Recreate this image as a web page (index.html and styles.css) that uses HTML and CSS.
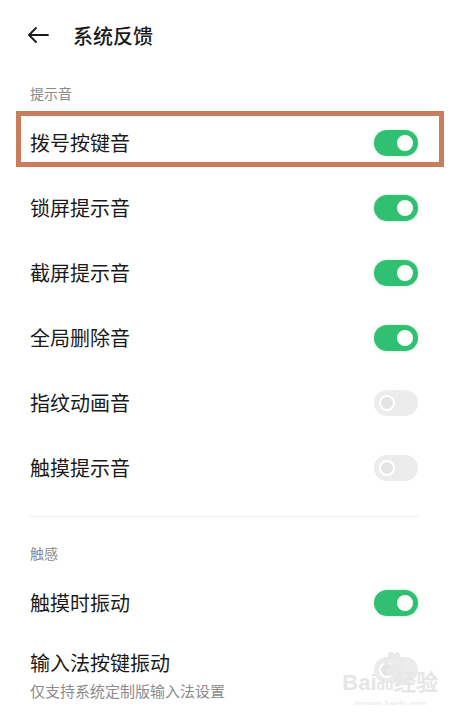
FILE: index.html
```html
<!doctype html>
<html lang="zh-CN">
<head>
    <meta charset="utf-8">
    <meta name="viewport" content="width=device-width, initial-scale=1">
    <title>系统反馈</title>
    <link rel="stylesheet" href="styles.css">
</head>
<body>
    <div class="header">
        <svg class="back" width="22" height="16" viewBox="0 0 22 16">
            <path d="M21 8H2M9 1L2 8l7 7" fill="none" stroke="#1a1a1a" stroke-width="1.8" stroke-linecap="round" stroke-linejoin="round"/>
        </svg>
        <span class="title">系统反馈</span>
    </div>

    <div class="section first">提示音</div>
    <div class="row marked"><span class="name">拨号按键音</span><span class="switch on"></span></div>
    <div class="row"><span class="name">锁屏提示音</span><span class="switch on"></span></div>
    <div class="row"><span class="name">截屏提示音</span><span class="switch on"></span></div>
    <div class="row"><span class="name">全局删除音</span><span class="switch on"></span></div>
    <div class="row"><span class="name">指纹动画音</span><span class="switch"></span></div>
    <div class="row"><span class="name">触摸提示音</span><span class="switch"></span></div>

    <div class="divider"></div>

    <div class="section">触感</div>
    <div class="row"><span class="name">触摸时振动</span><span class="switch on"></span></div>
    <div class="row two-line">
        <div>
            <div class="name">输入法按键振动</div>
            <div class="note">仅支持系统定制版输入法设置</div>
        </div>
        <span class="switch"></span>
    </div>

    <div class="watermark">
        <svg class="paw" width="26" height="24" viewBox="0 0 26 24">
            <g fill="#e9e9e9">
                <ellipse cx="6" cy="9" rx="3" ry="4"/>
                <ellipse cx="11" cy="4" rx="3" ry="4"/>
                <ellipse cx="17" cy="4" rx="3" ry="4"/>
                <ellipse cx="22" cy="9" rx="3" ry="4"/>
                <path d="M14 11c-4 0-8 5-8 9 0 3 3 4 8 4s8-1 8-4c0-4-4-9-8-9z"/>
            </g>
        </svg>
        <div class="mark">Bai<span class="du">du</span>经验</div>
        <div class="url">jingyan.baidu.com</div>
    </div>
</body>
</html>
```

FILE: styles.css
```css
body {
    margin: 0;
    background: #fff;
    font-family: "Noto Sans CJK SC", "Noto Sans", sans-serif;
    color: #1a1a1a;
    position: relative;
}

.header {
    height: 70px;
    display: flex;
    align-items: center;
    padding-left: 27px;
    gap: 24px;
}
.header .title {
    font-size: 20px;
    font-weight: 500;
}

.section {
    font-size: 14px;
    line-height: 20px;
    color: #8a8a8a;
    padding-left: 30px;
    margin-top: 26px;
    margin-bottom: 7px;
}
.section.first { margin-top: 13px; }

.row {
    height: 65px;
    display: flex;
    align-items: center;
    justify-content: space-between;
    padding: 0 42px 0 30px;
    font-size: 20px;
    position: relative;
}
.row.two-line {
    height: 70px;
    align-items: flex-start;
    padding-top: 14px;
    box-sizing: border-box;
}
.row.two-line .name { line-height: 28px; }
.row.two-line .switch { margin-top: 8px; }
.note {
    font-size: 15px;
    line-height: 20px;
    margin-top: 4px;
    color: #8c8c8c;
}

/* annotation box drawn over the first row */
.row.marked::after {
    content: "";
    position: absolute;
    left: 16px; top: 1px;
    width: 418px; height: 46px;
    border: 5px solid #c97d5b;
}

.switch {
    width: 44px; height: 26px;
    border-radius: 13px;
    background: #ececec;
    position: relative;
    flex-shrink: 0;
}
.switch::after {
    content: "";
    position: absolute;
    top: 5px; left: 5px;
    width: 12px; height: 12px;
    border-radius: 50%;
    background: #e4e4e4;
    border: 2px solid #fff;
}
.switch.on {
    background: #31bf72;
    box-shadow: 0 0 3px rgba(49, 191, 114, 0.35);
}
.switch.on::after {
    left: auto; right: 5px;
    background: #fff;
    border-color: #fff;
}

.divider {
    height: 1px;
    background: #eeeeee;
    margin: 16px 42px 0 30px;
}

.watermark {
    position: absolute;
    left: 340px; top: 652px;
    width: 100px;
    color: #e6e6e6;
    text-align: center;
    font-family: "Liberation Sans", sans-serif;
}
.watermark .paw {
    display: block;
    margin: 0 0 -6px 40px;
}
.watermark .mark {
    font-size: 22px;
    font-weight: bold;
    line-height: 26px;
    white-space: nowrap;
}
.watermark .mark .du {
    font-size: 14px;
}
.watermark .url {
    font-size: 9px;
    line-height: 12px;
}
```
